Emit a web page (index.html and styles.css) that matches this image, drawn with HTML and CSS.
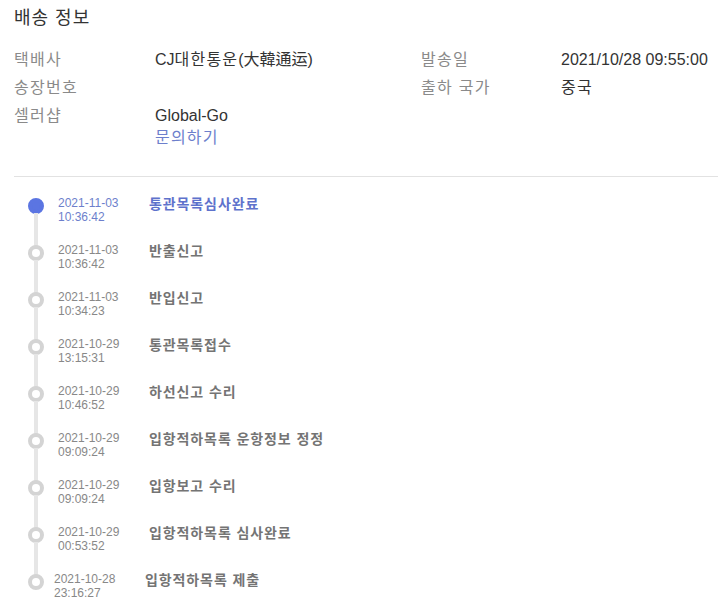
FILE: index.html
```html
<!DOCTYPE html>
<html lang="ko">
<head>
    <meta charset="UTF-8">
    <meta name="viewport" content="width=device-width, initial-scale=1.0">
    <title>배송 정보</title>
    <link rel="stylesheet" href="styles.css">
</head>
<body>
    <div class="shipping">
        <h2 class="title">배송 정보</h2>

        <div class="info">
            <div class="info-col">
                <div class="info-row">
                    <span class="label">택배사</span>
                    <span class="value">CJ<span class="ko">대한통운</span>(大韓通运)</span>
                </div>
                <div class="info-row">
                    <span class="label">송장번호</span>
                    <span class="value"></span>
                </div>
                <div class="info-row">
                    <span class="label">셀러샵</span>
                    <span class="value">
                        Global-Go<br>
                        <a href="#" class="ask ko">문의하기</a>
                    </span>
                </div>
            </div>
            <div class="info-col">
                <div class="info-row">
                    <span class="label">발송일</span>
                    <span class="value">2021/10/28 09:55:00</span>
                </div>
                <div class="info-row">
                    <span class="label">출하 국가</span>
                    <span class="value ko">중국</span>
                </div>
            </div>
        </div>

        <ul class="timeline">
            <li class="step active">
                <div class="marker"><span class="dot"></span><span class="line"></span></div>
                <div class="date">2021-11-03<br>10:36:42</div>
                <div class="name">통관목록심사완료</div>
            </li>
            <li class="step">
                <div class="marker"><span class="dot"></span><span class="line"></span></div>
                <div class="date">2021-11-03<br>10:36:42</div>
                <div class="name">반출신고</div>
            </li>
            <li class="step">
                <div class="marker"><span class="dot"></span><span class="line"></span></div>
                <div class="date">2021-11-03<br>10:34:23</div>
                <div class="name">반입신고</div>
            </li>
            <li class="step">
                <div class="marker"><span class="dot"></span><span class="line"></span></div>
                <div class="date">2021-10-29<br>13:15:31</div>
                <div class="name">통관목록접수</div>
            </li>
            <li class="step">
                <div class="marker"><span class="dot"></span><span class="line"></span></div>
                <div class="date">2021-10-29<br>10:46:52</div>
                <div class="name">하선신고 수리</div>
            </li>
            <li class="step">
                <div class="marker"><span class="dot"></span><span class="line"></span></div>
                <div class="date">2021-10-29<br>09:09:24</div>
                <div class="name">입항적하목록 운항정보 정정</div>
            </li>
            <li class="step">
                <div class="marker"><span class="dot"></span><span class="line"></span></div>
                <div class="date">2021-10-29<br>09:09:24</div>
                <div class="name">입항보고 수리</div>
            </li>
            <li class="step">
                <div class="marker"><span class="dot"></span><span class="line"></span></div>
                <div class="date">2021-10-29<br>00:53:52</div>
                <div class="name">입항적하목록 심사완료</div>
            </li>
            <li class="step last">
                <div class="marker"><span class="dot"></span></div>
                <div class="date">2021-10-28<br>23:16:27</div>
                <div class="name">입항적하목록 제출</div>
            </li>
        </ul>
    </div>
</body>
</html>
```

FILE: styles.css
```css
* {
    margin: 0;
    padding: 0;
    box-sizing: border-box;
}
body {
    background: #fff;
    font-family: "Liberation Sans", Arial, "Noto Sans CJK KR", sans-serif;
    color: #333;
}
.shipping {
    padding: 6px 0 0 14px;
}
.title {
    font-size: 18px;
    font-weight: normal;
    line-height: 24px;
    letter-spacing: 1px;
    color: #333;
}
.info {
    display: flex;
    margin-top: 19px;
    padding-bottom: 21px;
    border-bottom: 1px solid #e2e2e2;
}
.info-col {
    width: 407px;
}
.info-col + .info-col {
    flex: 1;
}
.info-row {
    display: flex;
    font-size: 16px;
    line-height: 22px;
    margin-bottom: 6px;
}
.label {
    width: 141px;
    flex-shrink: 0;
    letter-spacing: 1.3px;
    color: #8a8a8a;
}
.info-col + .info-col .label {
    width: 140px;
}
.value {
    color: #333;
}
.ko {
    letter-spacing: 1.2px;
}
.ask {
    color: #6d7fcc;
    text-decoration: none;
}
.timeline {
    list-style: none;
    margin-top: 19px;
}
.step {
    display: flex;
    height: 47px;
}
.marker {
    width: 16px;
    margin-left: 14px;
    padding-top: 2px;
    display: flex;
    flex-direction: column;
    align-items: center;
}
.dot {
    width: 16px;
    height: 16px;
    border-radius: 50%;
    border: 4px solid #d4d4d4;
    background: #fff;
    flex-shrink: 0;
}
.line {
    width: 4px;
    flex: 1;
    margin-top: -1px;
    margin-bottom: -3px;
    background: #e6e6e6;
}
.date {
    width: 91px;
    margin-left: 14px;
    font-size: 12px;
    line-height: 14px;
    color: #888;
}
.name {
    font-size: 14px;
    font-weight: bold;
    line-height: 16px;
    letter-spacing: 0.9px;
    color: #747474;
}
.active .dot {
    border-color: #5b75e2;
    background: #5b75e2;
}
.active .date {
    color: #6d7fcc;
}
.active .name {
    color: #5e72cc;
}
.last .date {
    margin-left: 10px;
}
```
